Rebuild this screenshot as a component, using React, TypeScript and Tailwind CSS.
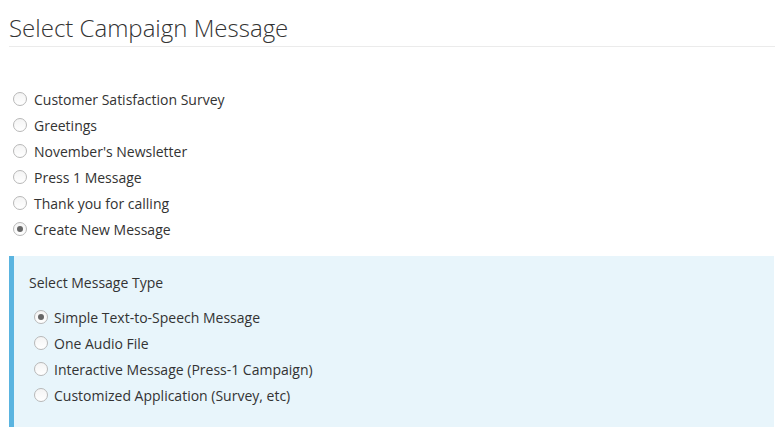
import React, { useState } from 'react';

const campaignMessages = [
  'Customer Satisfaction Survey',
  'Greetings',
  "November's Newsletter",
  'Press 1 Message',
  'Thank you for calling',
  'Create New Message',
];

const messageTypes = [
  'Simple Text-to-Speech Message',
  'One Audio File',
  'Interactive Message (Press-1 Campaign)',
  'Customized Application (Survey, etc)',
];

function Radio({ checked }: { checked: boolean }) {
  return (
    <span className="flex h-[14px] w-[14px] shrink-0 items-center justify-center rounded-full border border-[#b8b8b8] bg-gradient-to-b from-[#f4f4f4] to-white">
      {checked && <span className="h-[6px] w-[6px] rounded-full bg-[#666]" />}
    </span>
  );
}

function RadioRow({ label, checked, onClick, sub }: { label: string; checked: boolean; onClick: () => void; sub?: boolean }) {
  return (
    <label onClick={onClick} className={`flex h-[26px] cursor-pointer items-center ${sub ? 'gap-[6px]' : 'gap-[7px]'}`}>
      <Radio checked={checked} />
      <span className="text-[14px] text-[#333]">{label}</span>
    </label>
  );
}

export default function App() {
  const [message, setMessage] = useState('Create New Message');
  const [type, setType] = useState('Simple Text-to-Speech Message');

  return (
    <div className="h-[441px] w-full bg-white font-['Open_Sans',sans-serif]">
      <div className="ml-[9px] mr-[7px] border-b border-[#ebebeb] pb-[2px] pt-[12px]">
        <h1 className="text-[24px] font-light leading-[32px] text-[#333]">Select Campaign Message</h1>
      </div>

      <div className="mt-[39px] pl-[13px]">
        {campaignMessages.map((m) => (
          <RadioRow key={m} label={m} checked={message === m} onClick={() => setMessage(m)} />
        ))}
      </div>

      {message === 'Create New Message' && (
        <div className="ml-[9px] mr-[8px] mt-[14px] border-l-[5px] border-[#5ab4e0] bg-[#e8f5fb] pb-[19px] pl-[15px] pt-[13px]">
          <div className="flex h-[26px] items-center text-[14px] text-[#333]">Select Message Type</div>
          <div className="mt-[9px] pl-[5px]">
            {messageTypes.map((t) => (
              <RadioRow key={t} label={t} checked={type === t} onClick={() => setType(t)} sub />
            ))}
          </div>
        </div>
      )}
    </div>
  );
}
